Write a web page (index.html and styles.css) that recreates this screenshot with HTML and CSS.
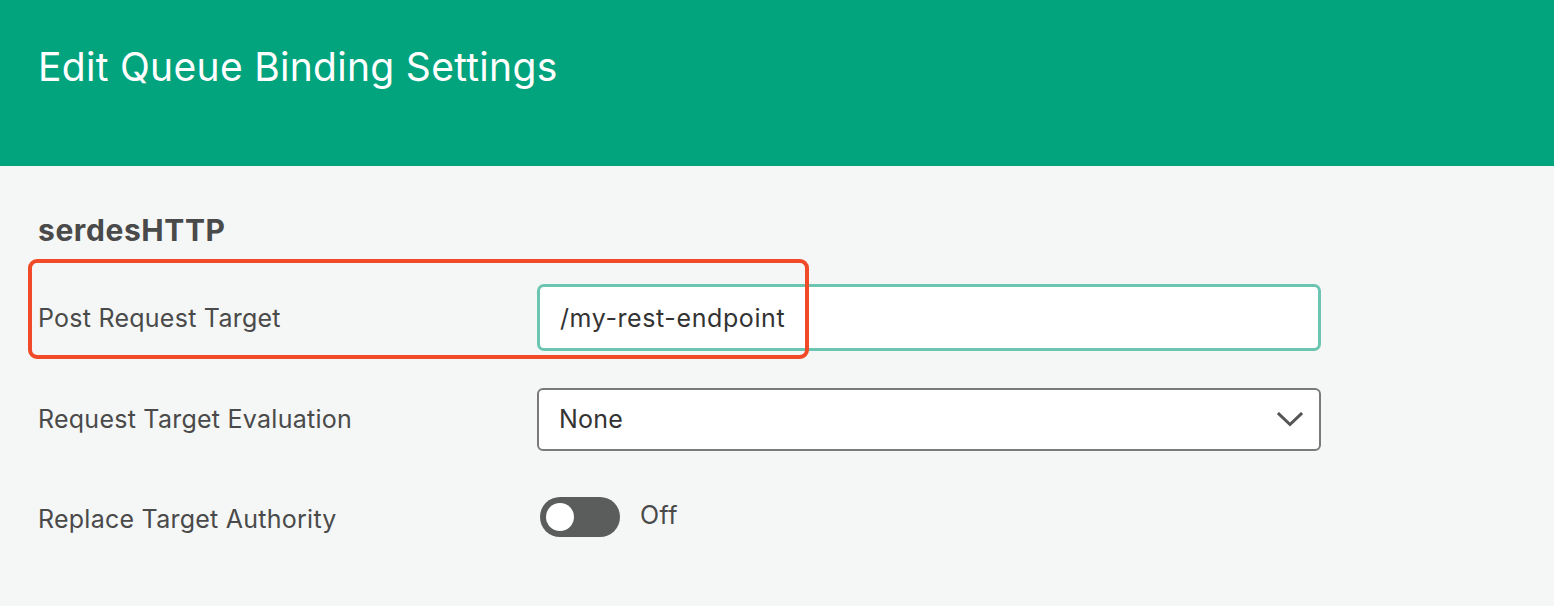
FILE: index.html
```html
<!DOCTYPE html>
<html lang="en">
<head>
<meta charset="utf-8">
<title>Edit Queue Binding Settings</title>
<link rel="stylesheet" href="styles.css">
</head>
<body>
<header class="header">
  <h1 class="title">Edit Queue Binding Settings</h1>
</header>
<main class="content">
  <h2 class="section-title">serdesHTTP</h2>
  <div class="form">
    <div class="highlight"></div>
    <label class="label" for="target">Post Request Target</label>
    <div class="field">
      <input id="target" class="input" type="text" value="/my-rest-endpoint">
    </div>

    <label class="label" for="evaluation">Request Target Evaluation</label>
    <div class="field">
      <div class="select" id="evaluation">
        <span class="select-value">None</span>
        <svg class="chevron" width="26" height="15" viewBox="0 0 26 15" aria-hidden="true">
          <path d="M2 2 L13 12.5 L24 2" fill="none" stroke="#555555" stroke-width="3" stroke-linecap="square"/>
        </svg>
      </div>
    </div>

    <span class="label">Replace Target Authority</span>
    <div class="field toggle-field">
      <span class="toggle"><span class="knob"></span></span>
      <span class="toggle-text">Off</span>
    </div>
  </div>
</main>
</body>
</html>
```

FILE: styles.css
```css
* { box-sizing: border-box; }

html, body {
  margin: 0;
  padding: 0;
}

body {
  background: #f5f7f6;
  font-family: "Inter", "Noto Sans", sans-serif;
  color: #4a4a4a;
  height: 606px;
  overflow: hidden;
}

.header {
  background: #02a47e;
  height: 166px;
  padding: 43px 38px 0;
}

.title {
  margin: 0;
  font-size: 39px;
  font-weight: 400;
  color: #ffffff;
  line-height: 48px;
  letter-spacing: 0.3px;
}

.content {
  padding: 0 38px;
}

.section-title {
  margin: 0;
  padding-top: 46px;
  font-size: 30px;
  font-weight: 700;
  line-height: 36px;
  letter-spacing: 0.6px;
  color: #4a4a4a;
}

.form {
  position: relative;
  margin-top: 36px;
  display: grid;
  grid-template-columns: 499px 784px;
  grid-auto-rows: minmax(64px, auto);
  row-gap: 36px;
  align-items: center;
}

.highlight {
  position: absolute;
  left: -10px;
  top: -25px;
  width: 781px;
  height: 100px;
  border: 4px solid #f14a29;
  border-radius: 9px;
  pointer-events: none;
  z-index: 2;
}

.label {
  font-size: 25px;
  line-height: 30px;
  letter-spacing: 0.25px;
  color: #4a4a4a;
}

.field {
  display: flex;
  align-items: center;
}

.input {
  width: 784px;
  height: 67px;
  border: 3px solid #6cc5b0;
  border-radius: 7px;
  background: #ffffff;
  padding: 0 20px;
  font-family: inherit;
  font-size: 25px;
  letter-spacing: 0.6px;
  color: #333333;
  outline: none;
}

.select {
  width: 784px;
  height: 63px;
  border: 2px solid #7a7a7a;
  border-radius: 6px;
  background: #ffffff;
  padding: 0 16px 0 20px;
  display: flex;
  align-items: center;
  justify-content: space-between;
  font-size: 25px;
  letter-spacing: 0.2px;
  color: #333333;
}

.chevron {
  display: block;
}

.toggle-field {
  gap: 20px;
  padding-left: 3px;
  margin-top: -4px;
}

.toggle {
  width: 80px;
  height: 40px;
  border-radius: 20px;
  background: #5b5d5c;
  display: flex;
  align-items: center;
  padding-left: 6px;
}

.knob {
  width: 28px;
  height: 28px;
  border-radius: 50%;
  background: #ffffff;
}

.toggle-text {
  font-size: 25px;
  letter-spacing: 0.4px;
  color: #4a4a4a;
  margin-top: -4px;
}
```
